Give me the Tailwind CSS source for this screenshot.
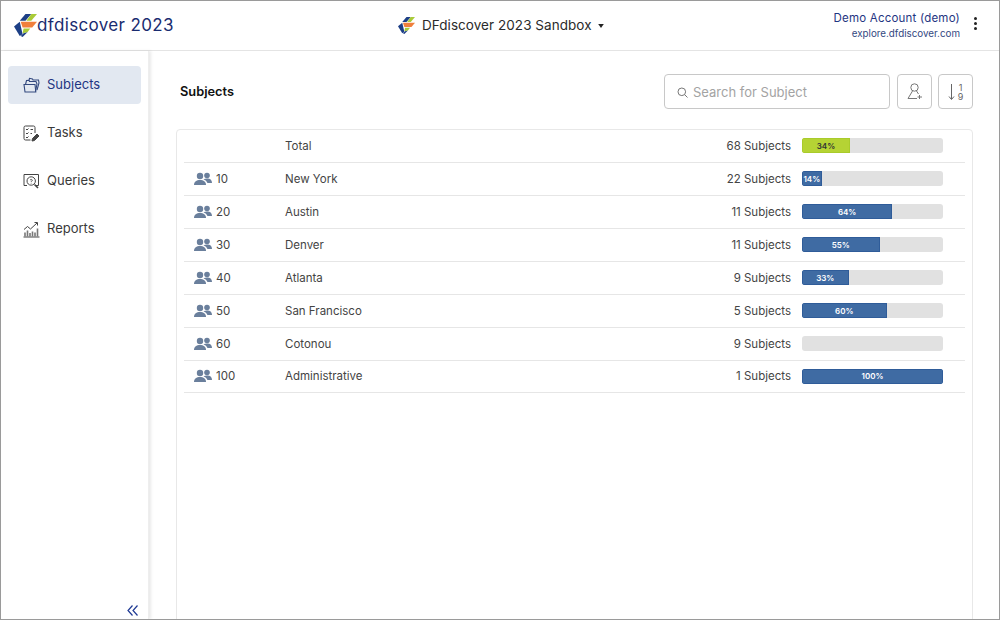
<!DOCTYPE html>
<html lang="en">
<head>
    <meta charset="UTF-8">
    <title>DFdiscover 2023 Sandbox</title>
    <script src="https://cdn.jsdelivr.net/npm/@tailwindcss/browser@4"></script>
</head>
<body class="w-[1000px] h-[620px] overflow-hidden bg-white font-['Inter','Liberation_Sans',sans-serif]">
    <div class="flex flex-col h-[620px] border border-[#9a9a9a] overflow-hidden">
        <!-- header -->
        <header class="h-[50px] shrink-0 border-b border-[#e4e4e4] flex items-center relative">
            <div class="flex items-center pl-[13px] w-[340px]">
                <svg width="23" height="23" viewBox="0 0 24 24">
                    <polygon points="12,0 18,0 12,7 6,7" fill="#1d3f86"/>
                    <polygon points="18,0 24,0 18,7 13,7" fill="#a9cb37"/>
                    <polygon points="0,13 6,8 9,21 6,23" fill="#1d3f86"/>
                    <polygon points="7,8 24,8 19,14 9,14" fill="#f07f3c"/>
                    <polygon points="10,15 17,15 14,19 9,20" fill="#a9cb37"/>
                    <polygon points="14,19 9,24 7,23 10,20" fill="#1d3f86"/>
                </svg>
                <span class="text-[17px] text-[#1a2c70] tracking-[0.35px] leading-none whitespace-nowrap">dfdiscover 2023</span>
            </div>
            <div class="flex items-center ml-[57px]">
                <svg width="17" height="17" viewBox="0 0 24 24">
                    <polygon points="12,0 18,0 12,7 6,7" fill="#1d3f86"/>
                    <polygon points="18,0 24,0 18,7 13,7" fill="#a9cb37"/>
                    <polygon points="0,13 6,8 9,21 6,23" fill="#1d3f86"/>
                    <polygon points="7,8 24,8 19,14 9,14" fill="#f07f3c"/>
                    <polygon points="10,15 17,15 14,19 9,20" fill="#a9cb37"/>
                    <polygon points="14,19 9,24 7,23 10,20" fill="#1d3f86"/>
                </svg>
                <span class="ml-[7px] text-[13.5px] text-[#2b2b2b] tracking-[0.05px] whitespace-nowrap">DFdiscover 2023 Sandbox</span>
                <svg class="ml-[6px]" width="6" height="4" viewBox="0 0 7 5"><polygon points="0,0 7,0 3.500,5" fill="#222"/></svg>
            </div>
            <div class="ml-auto flex items-center pr-[22px]">
                <div class="text-right">
                    <div class="text-[11.5px] leading-[15px] text-[#1f3582] tracking-[0.2px] whitespace-nowrap">Demo Account (demo)</div>
                    <div class="text-[9.8px] leading-[14px] mt-[1px] text-[#33487f] whitespace-nowrap">explore.dfdiscover.com</div>
                </div>
                <div class="ml-[14px] flex flex-col gap-[2px] mb-[4px]">
                    <span class="w-[3px] h-[3px] rounded-full bg-[#222]"></span>
                    <span class="w-[3px] h-[3px] rounded-full bg-[#222]"></span>
                    <span class="w-[3px] h-[3px] rounded-full bg-[#222]"></span>
                </div>
            </div>
        </header>

        <div class="flex flex-1 min-h-0">
            <!-- sidebar -->
            <aside class="w-[148px] shrink-0 shadow-[2px_0_3px_rgba(0,0,0,0.09)] border-r border-[#eeeeee] flex flex-col pt-[15px] pl-[7px] pr-[7px] relative">
                <a class="h-[38px] rounded-[4px] bg-[#e2e8f1] flex items-center pl-[15px] text-[13px] text-[#1f3582]">
                    <svg class="w-[17px] h-[17px] mr-[7px]" viewBox="0 0 17 17" fill="none" stroke="#33497f" stroke-width="1.100">
                        <path d="M1 7.500h11l.8 7.500H2z"/><path d="M2.500 7.500L3.500 3.500l2.500-.2.5 1.200h6.500l1 2.500-1.500 7.500"/><path d="M6 3.300l.5-2 3 .7.5 1h5.500L16 6l-2 7"/>
                    </svg>
                    <span>Subjects</span>
                </a>
                <a class="h-[38px] mt-[10px] flex items-center pl-[15px] text-[13px] text-[#3a3a3a]">
                    <svg class="w-[17px] h-[17px] mr-[7px]" viewBox="0 0 17 17" fill="none" stroke="#444" stroke-width="1">
                        <path d="M12 8V2.500q0-1.500-1.500-1.500H2.500Q1 1 1 2.500v11Q1 15 2.500 15h5"/><path d="M3 4l1 1 1.500-1.500M3 8l1 1 1.500-1.500M3 12l1 1 1.500-1.500M7.500 4.500h2.500M7.500 8.500h1.500"/><path d="M9 16l.5-2.500 4.500-4.500 2 2-4.500 4.500z" fill="#444"/>
                    </svg>
                    <span>Tasks</span>
                </a>
                <a class="h-[38px] mt-[10px] flex items-center pl-[15px] text-[13px] text-[#3a3a3a]">
                    <svg class="w-[17px] h-[17px] mr-[7px]" viewBox="0 0 17 17" fill="none" stroke="#444" stroke-width="1">
                        <path d="M4 12.500H1V1.500h14.500v11H13"/><circle cx="8.200" cy="8" r="4.200"/><path d="M11.500 11.500l3.500 3.500" stroke-width="1.600"/><path d="M7 7q1.200-1.300 2.400 0 0 1-1.200 1.500v.7M8.200 10v.5" stroke-width=".8"/>
                    </svg>
                    <span>Queries</span>
                </a>
                <a class="h-[38px] mt-[10px] flex items-center pl-[15px] text-[13px] text-[#3a3a3a]">
                    <svg class="w-[17px] h-[17px] mr-[7px]" viewBox="0 0 17 17" fill="none" stroke="#444" stroke-width="1">
                        <path d="M.5 16h16"/><path d="M2 15.500v-4M4.500 15.500v-6M7 15.500v-3.500M9.500 15.500v-5M12 15.500v-4M14.500 15.500v-8" stroke-width="1.600" stroke="#777"/><path d="M1 8.500l3.500-3 3 2.500 6.500-6"/><path d="M11.500 1.500h3v3"/>
                    </svg>
                    <span>Reports</span>
                </a>
                <svg class="absolute left-[126px] bottom-[3px]" width="11" height="11" viewBox="0 0 11 11" fill="none" stroke="#1f3a94" stroke-width="1.200">
                    <path d="M5.500 .5L1 5.500l4.500 5M10.500 .5L6 5.500l4.500 5"/>
                </svg>
            </aside>

            <!-- content -->
            <main class="flex-1 min-w-0 pl-[27px] pr-[26px] overflow-hidden">
                <div class="h-[78px] flex items-start">
                    <h1 class="mt-[31px] ml-[4px] text-[12.8px] font-semibold text-[#111]">Subjects</h1>
                    <div class="ml-auto mt-[23px] flex gap-[6px]">
                        <div class="w-[226px] h-[35px] mr-[1px] border border-[#c8c8c8] rounded-[4px] flex items-center pl-[12px] pt-[2px] text-[13px] text-[#a3a3a3]">
                            <svg class="mr-[5px] mb-[1px]" width="11" height="11" viewBox="0 0 11 11" fill="none" stroke="#777" stroke-width="1"><circle cx="4.800" cy="4.800" r="3.800"/><path d="M7.600 7.600L10.500 10.500"/></svg>
                            Search for Subject
                        </div>
                        <div class="w-[35px] h-[35px] border border-[#c8c8c8] rounded-[4px] flex items-center justify-center">
                            <svg width="16" height="17" viewBox="0 0 16 17" fill="none" stroke="#777" stroke-width="1">
                                <circle cx="7.500" cy="4.500" r="3.700"/><path d="M5.500 8L1 15.500h9M9.500 8l2 3M12.500 12v4M10.500 14h4.500"/>
                            </svg>
                        </div>
                        <div class="w-[35px] h-[35px] border border-[#c8c8c8] rounded-[4px] flex items-center justify-center gap-[3px]">
                            <svg width="7" height="16" viewBox="0 0 7 16" fill="none" stroke="#666" stroke-width="1"><path d="M3.500 0v15M1 12.500l2.500 3 2.500-3"/></svg>
                            <div class="flex flex-col items-center text-[9px] leading-[9px] text-[#666]"><span>1</span><span>9</span></div>
                        </div>
                    </div>
                </div>

                <section class="h-[600px] border border-[#e8e8e8] rounded-[4px] px-[7px] text-[11.5px] text-[#444]">
                    <div class="h-[33px] pt-[1px] border-b border-[#e6e6e6] flex items-center">
                        <div class="w-[101px] pl-[10px]"></div>
                        <div class="flex-1">Total</div>
                        <div class="mr-[11px]">68 Subjects</div>
                        <div class="w-[141px] h-[15px] mb-[2px] mr-[22px] rounded-[3px] bg-[#e1e1e1] overflow-hidden">
                            <div class="h-full bg-[#b5d334] border border-[#a9cb2b] text-[8px] font-semibold text-[#333] flex items-center justify-center w-[34%]">34%</div>
                        </div>
                    </div>
                    <div class="h-[33px] pt-[1px] border-b border-[#e6e6e6] flex items-center">
                        <div class="w-[101px] pl-[10px] flex items-center">
                            <svg class="mr-[4px] mb-[2px]" width="18" height="14" viewBox="0 0 18 14" fill="#6a7f9c"><circle cx="6" cy="4" r="3.200"/><circle cx="13" cy="3.500" r="2.800"/><path d="M0 13c0-3.500 2.500-5 6-5s6 1.500 6 5z"/><path d="M9.500 7.200q1.500-.7 3.500-.7c3 0 5 1.300 5 4.500h-4.500q-1-2.800-4-3.800z"/></svg>
                            10
                        </div>
                        <div class="flex-1">New York</div>
                        <div class="mr-[11px]">22 Subjects</div>
                        <div class="w-[141px] h-[15px] mb-[2px] mr-[22px] rounded-[3px] bg-[#e1e1e1] overflow-hidden">
                            <div class="h-full bg-[#3f6ba3] border border-[#2f5c99] text-[8px] font-semibold text-white flex items-center justify-center w-[14%]">14%</div>
                        </div>
                    </div>
                    <div class="h-[33px] pt-[1px] border-b border-[#e6e6e6] flex items-center">
                        <div class="w-[101px] pl-[10px] flex items-center">
                            <svg class="mr-[4px] mb-[2px]" width="18" height="14" viewBox="0 0 18 14" fill="#6a7f9c"><circle cx="6" cy="4" r="3.200"/><circle cx="13" cy="3.500" r="2.800"/><path d="M0 13c0-3.500 2.500-5 6-5s6 1.500 6 5z"/><path d="M9.500 7.200q1.500-.7 3.500-.7c3 0 5 1.300 5 4.500h-4.500q-1-2.800-4-3.800z"/></svg>
                            20
                        </div>
                        <div class="flex-1">Austin</div>
                        <div class="mr-[11px]">11 Subjects</div>
                        <div class="w-[141px] h-[15px] mb-[2px] mr-[22px] rounded-[3px] bg-[#e1e1e1] overflow-hidden">
                            <div class="h-full bg-[#3f6ba3] border border-[#2f5c99] text-[8px] font-semibold text-white flex items-center justify-center w-[64%]">64%</div>
                        </div>
                    </div>
                    <div class="h-[33px] pt-[1px] border-b border-[#e6e6e6] flex items-center">
                        <div class="w-[101px] pl-[10px] flex items-center">
                            <svg class="mr-[4px] mb-[2px]" width="18" height="14" viewBox="0 0 18 14" fill="#6a7f9c"><circle cx="6" cy="4" r="3.200"/><circle cx="13" cy="3.500" r="2.800"/><path d="M0 13c0-3.500 2.500-5 6-5s6 1.500 6 5z"/><path d="M9.500 7.200q1.500-.7 3.500-.7c3 0 5 1.300 5 4.500h-4.500q-1-2.800-4-3.800z"/></svg>
                            30
                        </div>
                        <div class="flex-1">Denver</div>
                        <div class="mr-[11px]">11 Subjects</div>
                        <div class="w-[141px] h-[15px] mb-[2px] mr-[22px] rounded-[3px] bg-[#e1e1e1] overflow-hidden">
                            <div class="h-full bg-[#3f6ba3] border border-[#2f5c99] text-[8px] font-semibold text-white flex items-center justify-center w-[55%]">55%</div>
                        </div>
                    </div>
                    <div class="h-[33px] pt-[1px] border-b border-[#e6e6e6] flex items-center">
                        <div class="w-[101px] pl-[10px] flex items-center">
                            <svg class="mr-[4px] mb-[2px]" width="18" height="14" viewBox="0 0 18 14" fill="#6a7f9c"><circle cx="6" cy="4" r="3.200"/><circle cx="13" cy="3.500" r="2.800"/><path d="M0 13c0-3.500 2.500-5 6-5s6 1.500 6 5z"/><path d="M9.500 7.200q1.500-.7 3.500-.7c3 0 5 1.300 5 4.500h-4.500q-1-2.800-4-3.800z"/></svg>
                            40
                        </div>
                        <div class="flex-1">Atlanta</div>
                        <div class="mr-[11px]">9 Subjects</div>
                        <div class="w-[141px] h-[15px] mb-[2px] mr-[22px] rounded-[3px] bg-[#e1e1e1] overflow-hidden">
                            <div class="h-full bg-[#3f6ba3] border border-[#2f5c99] text-[8px] font-semibold text-white flex items-center justify-center w-[33%]">33%</div>
                        </div>
                    </div>
                    <div class="h-[33px] pt-[1px] border-b border-[#e6e6e6] flex items-center">
                        <div class="w-[101px] pl-[10px] flex items-center">
                            <svg class="mr-[4px] mb-[2px]" width="18" height="14" viewBox="0 0 18 14" fill="#6a7f9c"><circle cx="6" cy="4" r="3.200"/><circle cx="13" cy="3.500" r="2.800"/><path d="M0 13c0-3.500 2.500-5 6-5s6 1.500 6 5z"/><path d="M9.500 7.200q1.500-.7 3.500-.7c3 0 5 1.300 5 4.500h-4.500q-1-2.800-4-3.800z"/></svg>
                            50
                        </div>
                        <div class="flex-1">San Francisco</div>
                        <div class="mr-[11px]">5 Subjects</div>
                        <div class="w-[141px] h-[15px] mb-[2px] mr-[22px] rounded-[3px] bg-[#e1e1e1] overflow-hidden">
                            <div class="h-full bg-[#3f6ba3] border border-[#2f5c99] text-[8px] font-semibold text-white flex items-center justify-center w-[60%]">60%</div>
                        </div>
                    </div>
                    <div class="h-[33px] pt-[1px] border-b border-[#e6e6e6] flex items-center">
                        <div class="w-[101px] pl-[10px] flex items-center">
                            <svg class="mr-[4px] mb-[2px]" width="18" height="14" viewBox="0 0 18 14" fill="#6a7f9c"><circle cx="6" cy="4" r="3.200"/><circle cx="13" cy="3.500" r="2.800"/><path d="M0 13c0-3.500 2.500-5 6-5s6 1.500 6 5z"/><path d="M9.500 7.200q1.500-.7 3.500-.7c3 0 5 1.300 5 4.500h-4.500q-1-2.800-4-3.800z"/></svg>
                            60
                        </div>
                        <div class="flex-1">Cotonou</div>
                        <div class="mr-[11px]">9 Subjects</div>
                        <div class="w-[141px] h-[15px] mb-[2px] mr-[22px] rounded-[3px] bg-[#e1e1e1] overflow-hidden"></div>
                    </div>
                    <div class="h-[32px] pt-[1px] border-b border-[#e6e6e6] flex items-center">
                        <div class="w-[101px] pl-[10px] flex items-center">
                            <svg class="mr-[4px] mb-[2px]" width="18" height="14" viewBox="0 0 18 14" fill="#6a7f9c"><circle cx="6" cy="4" r="3.200"/><circle cx="13" cy="3.500" r="2.800"/><path d="M0 13c0-3.500 2.500-5 6-5s6 1.500 6 5z"/><path d="M9.500 7.200q1.500-.7 3.500-.7c3 0 5 1.300 5 4.500h-4.500q-1-2.800-4-3.800z"/></svg>
                            100
                        </div>
                        <div class="flex-1">Administrative</div>
                        <div class="mr-[11px]">1 Subjects</div>
                        <div class="w-[141px] h-[15px] mb-[2px] mr-[22px] rounded-[3px] bg-[#e1e1e1] overflow-hidden">
                            <div class="h-full bg-[#3f6ba3] border border-[#2f5c99] text-[8px] font-semibold text-white flex items-center justify-center w-full">100%</div>
                        </div>
                    </div>
                </section>
            </main>
        </div>
    </div>
</body>
</html>
